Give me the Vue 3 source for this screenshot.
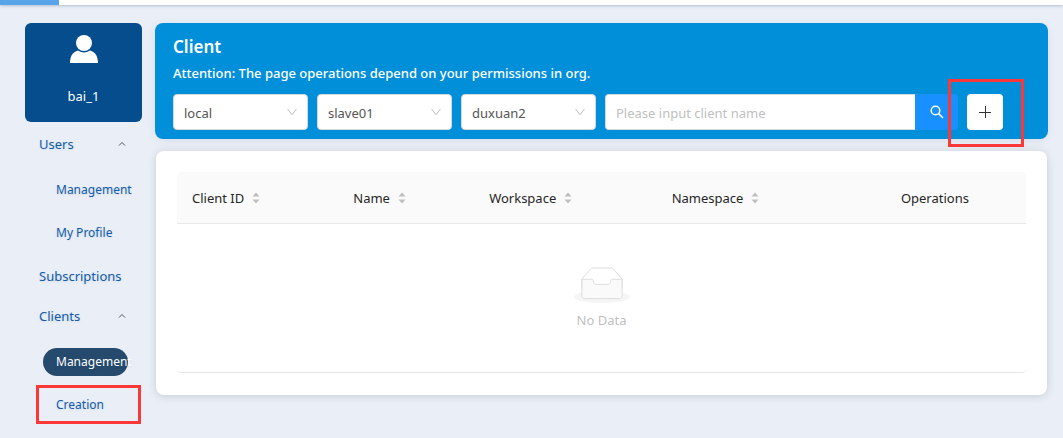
<script setup>
import { ref } from 'vue'

const selects = [
  { id: 'cluster', label: 'Cluster', value: 'local' },
  { id: 'workspace', label: 'Workspace', value: 'slave01' },
  { id: 'namespace', label: 'Namespace', value: 'duxuan2' },
]
const columns = [
  { title: 'Client ID', sortable: true, cls: 'col-id' },
  { title: 'Name', sortable: true, cls: 'col-name' },
  { title: 'Workspace', sortable: true, cls: 'col-workspace' },
  { title: 'Namespace', sortable: true, cls: 'col-namespace' },
  { title: 'Operations', sortable: false, cls: 'col-operations' },
]
const menu = [
  { title: 'Users', children: [{ title: 'Management' }, { title: 'My Profile' }] },
  { title: 'Subscriptions' },
  { title: 'Clients', children: [{ title: 'Management', active: true }, { title: 'Creation', marked: true }] },
]
const query = ref('')
</script>

<template>
  <div class="page">
    <div class="topbar"><div class="progress"></div></div>
    <div class="layout">
      <aside class="sidebar">
        <div class="profile">
          <svg class="avatar" viewBox="0 0 28 28" aria-hidden="true">
            <path d="M0 28C0 21 3 17 8 15.600Q14 19.500 20 15.600C25 17 28 21 28 28Z" fill="#fff" />
            <circle cx="14" cy="8" r="8" fill="#fff" />
          </svg>
          <span>bai_1</span>
        </div>
        <nav>
          <template v-for="item in menu" :key="item.title">
            <button v-if="item.children" class="group" type="button">
              <span>{{ item.title }}</span>
              <svg viewBox="0 0 8 6" class="caret" aria-hidden="true"><path d="M1 4.500L4 1.500L7 4.500" /></svg>
            </button>
            <a v-else class="single" href="#">{{ item.title }}</a>
            <ul v-if="item.children">
              <li v-for="child in item.children" :key="child.title">
                <a href="#" class="sub" :class="{ active: child.active }">{{ child.title }}</a>
                <span v-if="child.marked" class="mark mark-item"></span>
              </li>
            </ul>
          </template>
        </nav>
      </aside>

      <main>
        <section class="banner">
          <h1>Client</h1>
          <p>Attention: The page operations depend on your permissions in org.</p>
          <form class="filters" @submit.prevent>
            <div v-for="s in selects" :key="s.id" class="select">
              <select :id="s.id" :aria-label="s.label"><option>{{ s.value }}</option></select>
              <svg viewBox="0 0 10 8" aria-hidden="true"><path d="M0.500 0.800L5 6.800L9.500 0.800" /></svg>
            </div>
            <div class="search">
              <input v-model="query" type="text" aria-label="Client name" placeholder="Please input client name" />
              <button type="submit" aria-label="Search">
                <svg viewBox="0 0 14 14" aria-hidden="true"><circle cx="5.500" cy="5.500" r="4.300" /><path d="M8.600 8.600L13 13" /></svg>
              </button>
            </div>
            <div class="add">
              <button type="button" aria-label="Create client">
                <svg viewBox="0 0 12 12" aria-hidden="true"><path d="M0 6.500H12M6.500 0V12" /></svg>
              </button>
              <span class="mark mark-add"></span>
            </div>
          </form>
        </section>

        <section class="card">
          <table>
            <thead>
              <tr>
                <th v-for="c in columns" :key="c.title" :class="c.cls" scope="col">
                  <span class="head">{{ c.title }}
                    <svg v-if="c.sortable" viewBox="0 0 8 12" aria-hidden="true"><path d="M0.500 4.500L4 0.500L7.500 4.500ZM0.500 7.500L4 11.500L7.500 7.500Z" /></svg>
                  </span>
                </th>
              </tr>
            </thead>
            <tbody>
              <tr>
                <td :colspan="columns.length">
                  <div class="empty">
                    <svg viewBox="0 0 64 41" aria-hidden="true">
                      <g transform="translate(0 1)" fill="none" fill-rule="evenodd">
                        <ellipse fill="#f5f5f5" cx="32" cy="33" rx="32" ry="7" />
                        <g stroke="#d9d9d9" fill-rule="nonzero">
                          <path fill="#fff" d="M55 12.760L44.854 1.258C44.367.474 43.656 0 42.907 0H21.093c-.749 0-1.460.474-1.947 1.257L9 12.761V22h46v-9.240z" />
                          <path fill="#fafafa" d="M41.613 15.931c0-1.605.994-2.930 2.227-2.931H55v18.137C55 33.260 53.680 35 52.050 35h-40.100C10.320 35 9 33.259 9 31.137V13h11.160c1.233 0 2.227 1.323 2.227 2.928v.022c0 1.605 1.005 2.901 2.237 2.901h14.752c1.232 0 2.237-1.308 2.237-2.913v-.007z" />
                        </g>
                      </g>
                    </svg>
                    <span>No Data</span>
                  </div>
                </td>
              </tr>
            </tbody>
          </table>
        </section>
      </main>
    </div>
  </div>
</template>

<style>
body {
  background: #eaeff7;
}
</style>

<style scoped>
* {
  box-sizing: border-box;
}
.page {
  font: 13px/20px "Noto Sans", "Open Sans", sans-serif;
  color: #262626;
  overflow-x: clip;
}
button,
input,
select {
  font: inherit;
  margin: 0;
}
.topbar {
  height: 5px;
  background: #fff;
  box-shadow: 0 1px 3px rgba(0, 40, 90, 0.25);
}
.progress {
  width: 59px;
  height: 5px;
  background: #59a4e8;
}
.layout {
  display: flex;
  gap: 13px;
  padding: 18px 15px 10px 25px;
}
.sidebar {
  flex: 0 0 117px;
}
.profile {
  height: 99px;
  display: flex;
  flex-direction: column;
  align-items: center;
  justify-content: space-between;
  padding: 12px 0 16px;
  border-radius: 6px;
  background: #054d8d;
  color: #fff;
}
.avatar {
  width: 28px;
  height: 28px;
}
nav {
  padding-top: 2px;
}
nav a {
  color: #115ba8;
  text-decoration: none;
}
.group,
.single {
  display: flex;
  align-items: center;
  justify-content: space-between;
  width: 100%;
  height: 40px;
  padding: 0 16px 0 14px;
  border: 0;
  background: none;
  color: #115ba8;
  text-shadow: 0 1px 3px rgba(0, 60, 120, 0.12);
}
.caret {
  width: 8px;
  height: 6px;
  fill: none;
  stroke: #555;
}
ul {
  list-style: none;
  margin: 0;
  padding: 4px 0 2px 18px;
}
li {
  position: relative;
  height: 43px;
  display: flex;
  align-items: center;
}
.sub {
  width: 85px;
  height: 28px;
  font-size: 12px;
  line-height: 28px;
  padding-left: 13px;
  border-radius: 14px;
  white-space: nowrap;
  text-shadow: 0 1px 3px rgba(0, 60, 120, 0.12);
}
.sub.active {
  background: #254a6d;
  color: #fff;
}
.mark {
  position: absolute;
  border: 3px solid #fb3838;
  pointer-events: none;
}
.mark-item {
  inset: 2px 1px 2px -7px;
}
.mark-add {
  inset: -15px -21px -17px -19px;
}
main {
  flex: 1;
  min-width: 0;
}
.banner {
  padding: 12px 45px 9px 18px;
  border-radius: 8px;
  background: #028fda;
  color: #fff;
  box-shadow: 0 2px 10px rgba(0, 40, 90, 0.08);
}
h1 {
  margin: 0;
  font-size: 17px;
  line-height: 24px;
  font-weight: 600;
}
p {
  margin: 4px 0 11px;
  font-weight: 500;
}
.filters {
  display: flex;
  gap: 9px;
}
.select {
  position: relative;
  flex: 0 0 135px;
}
.select select {
  width: 100%;
  height: 36px;
  padding: 1px 10px 0;
  appearance: none;
  border: 1px solid #d9d9d9;
  border-radius: 4px;
  background: #fff;
  color: #555;
}
.select svg {
  position: absolute;
  right: 11px;
  top: 14px;
  width: 10px;
  height: 8px;
  fill: none;
  stroke: #bfbfbf;
  pointer-events: none;
}
.search {
  flex: 1;
  display: flex;
  min-width: 0;
}
.search input {
  flex: 1;
  min-width: 0;
  height: 36px;
  padding: 2px 10px 0;
  border: 1px solid #d9d9d9;
  border-right: 0;
  border-radius: 4px 0 0 4px;
  background: #fff;
}
.search input::placeholder {
  color: #bfbfbf;
}
.search button {
  display: grid;
  place-items: center;
  width: 43px;
  height: 36px;
  border: 0;
  border-radius: 0 4px 4px 0;
  background: #1890ff;
}
.search svg {
  width: 14px;
  height: 14px;
  fill: none;
  stroke: #fff;
  stroke-width: 1.5;
}
.add {
  position: relative;
}
.add button {
  display: grid;
  place-items: center;
  width: 36px;
  height: 36px;
  padding: 0;
  border: 0;
  border-radius: 4px;
  background: #fff;
}
.add svg {
  width: 12px;
  height: 12px;
  stroke: #333;
}
.card {
  margin: 12px 1px 0;
  padding: 21px 21px 22px;
  border-radius: 8px;
  background: #fff;
  box-shadow: 0 1px 8px rgba(0, 20, 40, 0.16);
}
table {
  width: 100%;
  table-layout: fixed;
  border-collapse: separate;
  border-spacing: 0;
}
th {
  height: 52px;
  padding: 0 15px;
  border-bottom: 1px solid #e8e8e8;
  background: #fafafa;
  font-weight: 400;
  text-align: left;
}
th:first-child {
  border-top-left-radius: 4px;
}
th:last-child {
  border-top-right-radius: 4px;
}
.head {
  display: flex;
  align-items: center;
  gap: 8px;
}
.head svg {
  width: 8px;
  height: 12px;
  fill: #bfbfbf;
}
.col-id {
  width: 19%;
}
.col-name {
  width: 16%;
}
.col-workspace {
  width: 21.5%;
}
.col-namespace {
  width: 27%;
}
td {
  padding: 0;
  border-bottom: 1px solid #e8e8e8;
  border-radius: 0 0 4px 4px;
}
.empty {
  display: flex;
  flex-direction: column;
  align-items: center;
  gap: 7px;
  padding: 43px 0 42px;
  color: #bfbfbf;
}
.empty svg {
  width: 56px;
  height: 36px;
}
</style>
